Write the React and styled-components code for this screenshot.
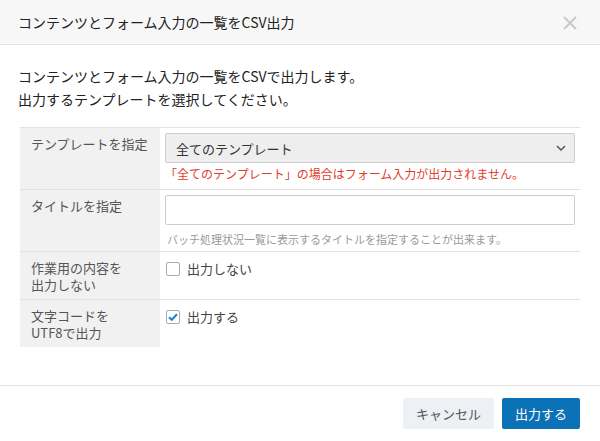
import React from 'react';
import styled, { createGlobalStyle } from 'styled-components';

const GlobalStyle = createGlobalStyle`
  html, body {
    margin: 0;
    padding: 0;
    background: #fff;
  }
  body {
    font-family: "Noto Sans CJK JP", "Noto Sans", sans-serif;
    color: #333;
  }
`;

const Dialog = styled.div`
  width: 600px;
  height: 441px;
  display: flex;
  flex-direction: column;
  background: #fff;
`;

const Header = styled.header`
  height: 44px;
  display: flex;
  align-items: center;
  justify-content: space-between;
  padding: 0 23px 0 18px;
  background: #f7f7f7;
  border-bottom: 1px solid #e2e2e2;
`;

const Title = styled.h1`
  margin: 0;
  font-size: 14px;
  font-weight: 400;
  color: #222;
`;

const Close = styled.button`
  border: 0;
  background: none;
  padding: 0;
  width: 14px;
  height: 14px;
  display: flex;
  align-items: center;
  justify-content: center;
  margin-top: 2px;
`;

const Body = styled.div`
  flex: 1;
  padding: 20px 20px 0 20px;
`;

const Intro = styled.p`
  margin: 0 0 16px -2px;
  font-size: 14px;
  font-weight: 400;
  line-height: 23px;
  color: #222;
`;

const Table = styled.div`
  border-top: 1px solid #e2e2e2;
`;

const Row = styled.div`
  display: grid;
  grid-template-columns: 140px 1fr;
  border-bottom: ${({ $last }) => ($last ? 'none' : '1px solid #e2e2e2')};
`;

const Label = styled.div`
  background: #f1f1f1;
  padding: 7px 11px 6px;
  font-size: 13px;
  line-height: 17px;
  color: #555;
`;

const Cell = styled.div`
  padding: 5px 5px 0 5px;
  display: flex;
  flex-direction: column;
`;

const SelectWrap = styled.div`
  position: relative;
`;

const Select = styled.select`
  appearance: none;
  width: 100%;
  height: 30px;
  padding: 0 10px;
  border: 1px solid #cdcdcd;
  border-radius: 2px;
  background: #eeeeee;
  font-family: inherit;
  font-size: 13px;
  color: #333;
`;

const Chevron = styled.svg`
  position: absolute;
  right: 9px;
  top: 12px;
  pointer-events: none;
`;

const Input = styled.input`
  box-sizing: border-box;
  width: 100%;
  height: 30px;
  border: 1px solid #cdcdcd;
  border-radius: 2px;
  background: #fff;
`;

const Note = styled.div`
  line-height: 16px;
  margin-top: ${({ $tone }) => ($tone === 'error' ? '3px' : '6px')};
  padding-bottom: ${({ $tone }) => ($tone === 'error' ? '7px' : '4px')};
  color: ${({ $tone }) => ($tone === 'error' ? '#e23b2e' : '#9a9a9a')};
  font-size: ${({ $tone }) => ($tone === 'error' ? '12px' : '11px')};
  padding-left: ${({ $tone }) => ($tone === 'error' ? '0' : '2px')};
`;

const Check = styled.label`
  display: flex;
  align-items: center;
  gap: 7px;
  padding: 4px 0 0 1px;
  font-size: 13px;
  line-height: 16px;
  color: #444;
`;

const Box = styled.span`
  box-sizing: border-box;
  width: 14px;
  height: 14px;
  border: 1px solid #aaa;
  border-radius: 2px;
  background: #fff;
  display: flex;
  align-items: center;
  justify-content: center;
`;

const Footer = styled.footer`
  border-top: 1px solid #e2e2e2;
  padding: 12px 20px 12px;
  display: flex;
  justify-content: flex-end;
  gap: 8px;
`;

const Button = styled.button`
  height: 31px;
  padding: 0 13px;
  border: 0;
  border-radius: 2px;
  font-family: inherit;
  font-size: 13px;
  background: ${({ $primary }) => ($primary ? '#0b72b8' : '#edf0f4')};
  color: ${({ $primary }) => ($primary ? '#fff' : '#555')};
`;

const Checkbox = ({ checked, children }) => (
  <Check>
    <Box>
      {checked && (
        <svg width="10" height="8" viewBox="0 0 10 8">
          <path d="M1 4.2 L3.8 6.8 L9 1.2" fill="none" stroke="#1a82d0" strokeWidth="2" />
        </svg>
      )}
    </Box>
    {children}
  </Check>
);

const App = () => (
  <Dialog>
    <GlobalStyle />
    <Header>
      <Title>コンテンツとフォーム入力の一覧をCSV出力</Title>
      <Close aria-label="close">
        <svg width="14" height="14" viewBox="0 0 14 14">
          <path d="M1 1 L13 13 M13 1 L1 13" stroke="#c9c9c9" strokeWidth="2" />
        </svg>
      </Close>
    </Header>
    <Body>
      <Intro>
        コンテンツとフォーム入力の一覧をCSVで出力します。
        <br />
        出力するテンプレートを選択してください。
      </Intro>
      <Table>
        <Row>
          <Label>テンプレートを指定</Label>
          <Cell>
            <SelectWrap>
              <Select defaultValue="all">
                <option value="all">全てのテンプレート</option>
              </Select>
              <Chevron width="10" height="6" viewBox="0 0 10 6">
                <path d="M1 1 L5 5 L9 1" fill="none" stroke="#555" strokeWidth="1.5" />
              </Chevron>
            </SelectWrap>
            <Note $tone="error">「全てのテンプレート」の場合はフォーム入力が出力されません。</Note>
          </Cell>
        </Row>
        <Row>
          <Label>タイトルを指定</Label>
          <Cell>
            <Input type="text" />
            <Note>バッチ処理状況一覧に表示するタイトルを指定することが出来ます。</Note>
          </Cell>
        </Row>
        <Row>
          <Label>
            作業用の内容を
            <br />
            出力しない
          </Label>
          <Cell>
            <Checkbox>出力しない</Checkbox>
          </Cell>
        </Row>
        <Row $last>
          <Label>
            文字コードを
            <br />
            UTF8で出力
          </Label>
          <Cell>
            <Checkbox checked>出力する</Checkbox>
          </Cell>
        </Row>
      </Table>
    </Body>
    <Footer>
      <Button>キャンセル</Button>
      <Button $primary>出力する</Button>
    </Footer>
  </Dialog>
);

export default App;
